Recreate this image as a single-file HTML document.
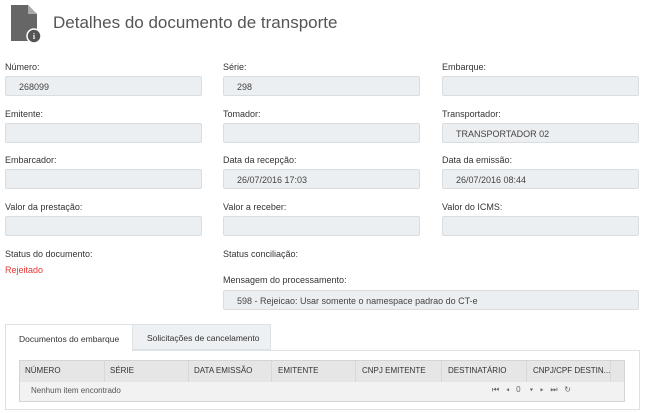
<!DOCTYPE html><html><head><style>
body{margin:0;width:645px;height:413px;background:#fff;font-family:"Liberation Sans",sans-serif;color:#333;position:relative;overflow:hidden}
.a{position:absolute}
.l{font-size:9px;color:#333}
.i{height:20px;background:#eceff1;border:1px solid #d9dde0;border-radius:2px;box-sizing:border-box;font-size:9px;color:#444;padding:5px 0 0 13px;width:197px}
.h{font-size:8px;color:#333;top:366px}
.sep{top:361px;width:1px;height:21px;background:#d8d8d8}
</style></head><body>
<svg class="a" style="left:10px;top:4px" width="34" height="40" viewBox="0 0 34 40"><path d="M1 1h17l9 9v27H1z" fill="#666"/><path d="M18 1v9h9z" fill="#aaa"/><circle cx="24" cy="32" r="7" fill="#555" stroke="#fff" stroke-width="1.5"/><text x="24" y="35" font-size="8" fill="#fff" text-anchor="middle" font-weight="bold" font-family="Liberation Serif">i</text></svg>
<div class="a" style="left:53px;top:13px;font-size:17px;color:#555">Detalhes do documento de transporte</div>

<div class="a l" style="left:5px;top:62px">Número:</div><div class="a i" style="left:5px;top:76px">268099</div>
<div class="a l" style="left:223px;top:62px">Série:</div><div class="a i" style="left:223px;top:76px">298</div>
<div class="a l" style="left:442px;top:62px">Embarque:</div><div class="a i" style="left:442px;top:76px"></div>

<div class="a l" style="left:5px;top:109px">Emitente:</div><div class="a i" style="left:5px;top:123px"></div>
<div class="a l" style="left:223px;top:109px">Tomador:</div><div class="a i" style="left:223px;top:123px"></div>
<div class="a l" style="left:442px;top:109px">Transportador:</div><div class="a i" style="left:442px;top:123px">TRANSPORTADOR 02</div>

<div class="a l" style="left:5px;top:155px">Embarcador:</div><div class="a i" style="left:5px;top:169px"></div>
<div class="a l" style="left:223px;top:155px">Data da recepção:</div><div class="a i" style="left:223px;top:169px">26/07/2016 17:03</div>
<div class="a l" style="left:442px;top:155px">Data da emissão:</div><div class="a i" style="left:442px;top:169px">26/07/2016 08:44</div>

<div class="a l" style="left:5px;top:202px">Valor da prestação:</div><div class="a i" style="left:5px;top:216px"></div>
<div class="a l" style="left:223px;top:202px">Valor a receber:</div><div class="a i" style="left:223px;top:216px"></div>
<div class="a l" style="left:442px;top:202px">Valor do ICMS:</div><div class="a i" style="left:442px;top:216px"></div>

<div class="a l" style="left:5px;top:249px">Status do documento:</div>
<div class="a l" style="left:5px;top:265px;color:#e53935">Rejeitado</div>
<div class="a l" style="left:223px;top:249px">Status conciliação:</div>
<div class="a l" style="left:223px;top:275px">Mensagem do processamento:</div>
<div class="a i" style="left:223px;top:290px;width:416px">598 - Rejeicao: Usar somente o namespace padrao do CT-e</div>

<div class="a" style="left:5px;top:350px;width:635px;height:60px;border:1px solid #dde2e5;box-sizing:border-box"></div>
<div class="a" style="left:5px;top:324px;width:128px;height:27px;background:#fff;border:1px solid #dde2e5;border-bottom:none;box-sizing:border-box;font-size:8.5px;padding:9px 0 0 13px">Documentos do embarque</div>
<div class="a" style="left:133px;top:324px;width:138px;height:26px;background:#eef1f3;border:1px solid #dde2e5;border-left:none;box-sizing:border-box;font-size:8.5px;padding:8px 0 0 14px">Solicitações de cancelamento</div>
<div class="a" style="left:19px;top:360px;width:606px;height:42px;border:1px solid #d5d5d5;box-sizing:border-box;background:#f2f2f2"></div>
<div class="a" style="left:20px;top:361px;width:604px;height:21px;background:#e6e6e6"></div>
<div class="a h" style="left:25px">NÚMERO</div><div class="a sep" style="left:104px"></div>
<div class="a h" style="left:110px">SÉRIE</div><div class="a sep" style="left:188px"></div>
<div class="a h" style="left:194px">DATA EMISSÃO</div><div class="a sep" style="left:271px"></div>
<div class="a h" style="left:278px">EMITENTE</div><div class="a sep" style="left:355px"></div>
<div class="a h" style="left:362px">CNPJ EMITENTE</div><div class="a sep" style="left:441px"></div>
<div class="a h" style="left:448px">DESTINATÁRIO</div><div class="a sep" style="left:526px"></div>
<div class="a h" style="left:533px">CNPJ/CPF DESTIN...</div><div class="a sep" style="left:610px"></div>
<div class="a" style="left:31px;top:386px;font-size:8px;color:#555">Nenhum item encontrado</div>
<div class="a" style="left:492px;top:385px;font-size:8px;color:#666;white-space:pre">⏮   ◂   0    ▾   ▸   ⏭   ↻</div>
</body></html>
